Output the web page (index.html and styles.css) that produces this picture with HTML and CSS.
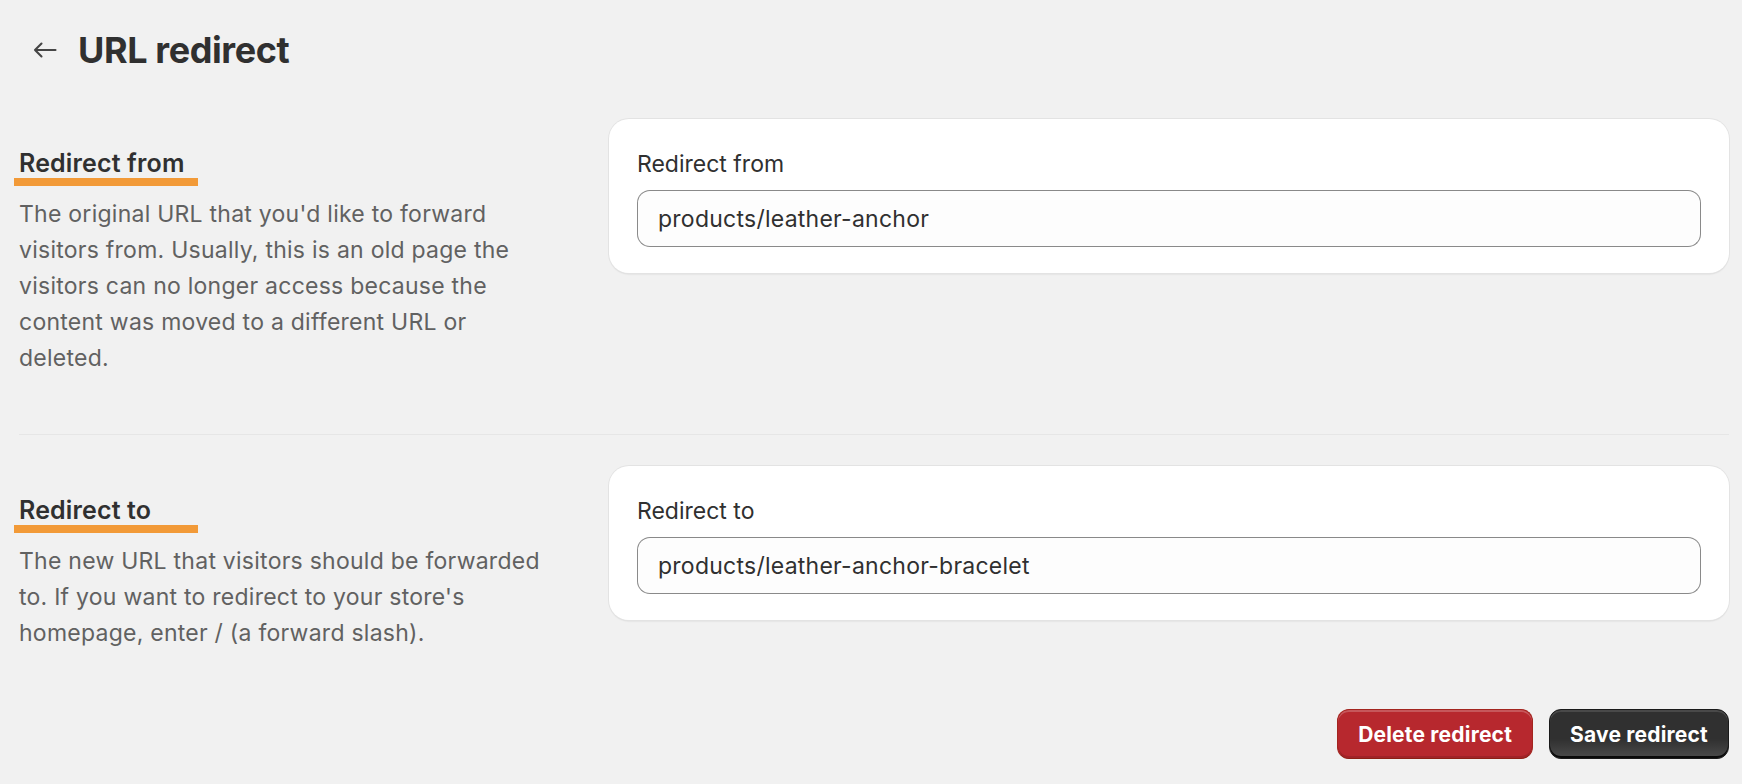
FILE: index.html
```html
<!DOCTYPE html>
<html lang="en">
<head>
<meta charset="utf-8">
<title>URL redirect</title>
<link rel="stylesheet" href="styles.css">
</head>
<body>
<div class="page">
  <header class="header">
    <a class="back" href="#" aria-label="Back">
      <svg width="24" height="16" viewBox="0 0 24 16" fill="none" stroke="currentColor" stroke-width="2.1" stroke-linecap="round" stroke-linejoin="round"><path d="M22.5 8H2M8.5 1.5L2 8l6.5 6.5"/></svg>
    </a>
    <h1 class="title">URL redirect</h1>
  </header>

  <section class="section section-first">
    <div class="info">
      <h2 class="info-title">Redirect from</h2>
      <div class="mark"></div>
      <p class="info-text">The original URL that you'd like to forward visitors from. Usually, this is an old page the visitors can no longer access because the content was moved to a different URL or deleted.</p>
    </div>
    <div class="card">
      <label class="field-label" for="from">Redirect from</label>
      <input class="field-input" id="from" type="text" value="products/leather-anchor">
    </div>
  </section>

  <section class="section">
    <div class="info">
      <h2 class="info-title">Redirect to</h2>
      <div class="mark"></div>
      <p class="info-text">The new URL that visitors should be forwarded to. If you want to redirect to your store's homepage, enter / (a forward slash).</p>
    </div>
    <div class="card">
      <label class="field-label" for="to">Redirect to</label>
      <input class="field-input" id="to" type="text" value="products/leather-anchor-bracelet">
    </div>
  </section>

  <footer class="actions">
    <button class="btn btn-critical" type="button">Delete redirect</button>
    <button class="btn btn-primary" type="button">Save redirect</button>
  </footer>
</div>
</body>
</html>
```
FILE: styles.css
```css
* { box-sizing: border-box; }

html, body {
  margin: 0;
  padding: 0;
  background: #f1f1f1;
}

body {
  font-family: Inter, "Noto Sans", "Liberation Sans", sans-serif;
  color: #303030;
  -webkit-font-smoothing: antialiased;
}

.page {
  padding: 0 13px 0 19px;
}

.header {
  display: flex;
  align-items: center;
  gap: 21px;
  padding: 28px 0 0 14px;
  height: 72px;
}

.back {
  display: flex;
  align-items: center;
  color: #454545;
  width: 24px;
  height: 16px;
}

.title {
  margin: 0;
  font-size: 36px;
  line-height: 44px;
  font-weight: 700;
  letter-spacing: -0.4px;
  color: #303030;
}

.section {
  display: grid;
  grid-template-columns: 533px 1fr;
  column-gap: 57px;
  align-items: start;
  padding-bottom: 58px;
  margin-top: 31px;
}

.section-first {
  margin-top: 47px;
  border-bottom: 1px solid #e6e6e6;
}

.info {
  padding-top: 30px;
}

.info-title {
  margin: 0;
  font-size: 25px;
  line-height: 29px;
  font-weight: 600;
  letter-spacing: 0.15px;
  color: #303030;
}

.mark {
  width: 184px;
  height: 8px;
  margin-left: -5px;
  background: #f29a38;
}

.info-text {
  margin: 10px 0 0;
  font-size: 23px;
  line-height: 36px;
  letter-spacing: 0.25px;
  color: #616161;
}

.card {
  background: #ffffff;
  border-radius: 20px;
  padding: 28px 28px 26px;
  box-shadow: 0 0 0 1px #e3e3e3, 0 2px 2px -1px rgba(0, 0, 0, 0.16);
  display: flex;
  flex-direction: column;
  gap: 9px;
}

.field-label {
  font-size: 23px;
  line-height: 34px;
  color: #303030;
}

.field-input {
  height: 57px;
  width: 100%;
  padding: 0 20px;
  font-family: inherit;
  font-size: 23px;
  letter-spacing: 0.25px;
  color: #303030;
  background: #fdfdfd;
  border: 1px solid #8a8a8a;
  border-top-color: #898989;
  border-radius: 13px;
  outline: none;
}

.actions {
  display: flex;
  justify-content: flex-end;
  gap: 16px;
}

.btn {
  height: 50px;
  padding: 0 20px;
  border-radius: 12px;
  font-family: inherit;
  font-size: 21px;
  font-weight: 700;
  letter-spacing: 0.2px;
  color: #ffffff;
  cursor: pointer;
}

.btn-critical {
  background: #b7282e;
  border: 1px solid #a3251f;
  border-bottom-color: #8c1f14;
  box-shadow: inset 0 2px 0 rgba(255, 255, 255, 0.22), inset 0 -2px 0 rgba(0, 0, 0, 0.12);
}

.btn-primary {
  background: linear-gradient(180deg, rgba(48, 48, 48, 0) 60%, rgba(255, 255, 255, 0.13) 100%), #303030;
  border: 1px solid #1a1a1a;
  box-shadow: inset 0 -2px 0 rgba(0, 0, 0, 0.85), inset 0 2px 0 rgba(255, 255, 255, 0.12);
}
```
